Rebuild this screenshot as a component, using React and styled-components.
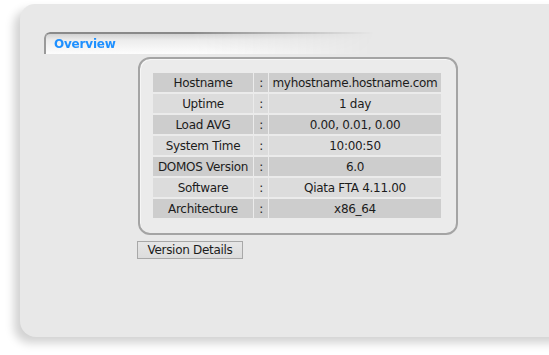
import React from "react";
import styled, { createGlobalStyle } from "styled-components";

const Global = createGlobalStyle`
  html, body { margin: 0; padding: 0; background: #ffffff; }
  body { font-family: "DejaVu Sans", Verdana, sans-serif; overflow: hidden; }
`;

const Page = styled.div`
  width: 549px;
  height: 355px;
  padding: 4px 0 0 20px;
  box-sizing: border-box;
  overflow: hidden;
`;

const Panel = styled.div`
  width: 560px;
  height: 333px;
  box-sizing: border-box;
  background: #e8e8e8;
  border-radius: 15px 0 0 16px;
  box-shadow: -6px 6px 10px rgba(0, 0, 0, 0.18);
  padding: 28px 0 0 24px;
`;

const TabHeader = styled.div`
  width: 330px;
  height: 22px;
  box-sizing: border-box;
  border-top: 2px solid #8a8a8a;
  border-left: 2px solid #9a9a9a;
  border-top-left-radius: 6px;
  background: linear-gradient(to bottom, #d2d2d2 0%, #ececec 30%, #fdfdfd 100%);
  -webkit-mask-image: linear-gradient(to right, #000 45%, transparent 100%);
  mask-image: linear-gradient(to right, #000 45%, transparent 100%);
  padding: 0 0 0 8px;
  line-height: 18px;
`;

const TabTitle = styled.span`
  font-size: 12px;
  font-weight: bold;
  letter-spacing: -0.2px;
  color: #1e90ff;
`;

const Content = styled.div`
  margin: 3px 0 0 94px;
  display: flex;
  flex-direction: column;
  align-items: flex-start;
`;

const InfoBox = styled.div`
  width: 320px;
  height: 178px;
  box-sizing: border-box;
  border: 2px solid #a4a4a4;
  border-radius: 12px;
  background: #ebebeb;
  box-shadow: inset 1px 1px 0 #f6f6f6;
  padding: 14px 0 0 13px;
`;

const InfoGrid = styled.div`
  display: grid;
  grid-template-columns: 100px 14px 172px;
  grid-auto-rows: 19px;
  gap: 2px 1px;
  font-size: 12px;
  letter-spacing: -0.3px;
  color: #1c1c1c;
`;

const Cell = styled.div`
  background: ${(p) => (p.$dark ? "#cdcdcd" : "#dcdcdc")};
  display: flex;
  align-items: center;
  justify-content: center;
  white-space: nowrap;
  padding-top: 1px;
  box-sizing: border-box;
`;

const Button = styled.button`
  margin: 6px 0 0 -1px;
  width: 106px;
  height: 18px;
  box-sizing: border-box;
  border: 1px solid #a8a8a8;
  background: linear-gradient(to bottom, #e6e6e6, #dcdcdc);
  font-family: "DejaVu Sans", Verdana, sans-serif;
  font-size: 12px;
  letter-spacing: -0.3px;
  color: #1c1c1c;
  padding: 0;
  line-height: 16px;
`;

const rows = [
  ["Hostname", "myhostname.hostname.com"],
  ["Uptime", "1 day"],
  ["Load AVG", "0.00, 0.01, 0.00"],
  ["System Time", "10:00:50"],
  ["DOMOS Version", "6.0"],
  ["Software", "Qiata FTA 4.11.00"],
  ["Architecture", "x86_64"],
];

export default function App() {
  return (
    <>
      <Global />
      <Page>
        <Panel>
          <TabHeader>
            <TabTitle>Overview</TabTitle>
          </TabHeader>
          <Content>
            <InfoBox>
              <InfoGrid>
                {rows.map(([k, v], i) => (
                  <React.Fragment key={k}>
                    <Cell $dark={i % 2 === 0}>{k}</Cell>
                    <Cell $dark={i % 2 === 0}>:</Cell>
                    <Cell $dark={i % 2 === 0}>{v}</Cell>
                  </React.Fragment>
                ))}
              </InfoGrid>
            </InfoBox>
            <Button>Version Details</Button>
          </Content>
        </Panel>
      </Page>
    </>
  );
}
